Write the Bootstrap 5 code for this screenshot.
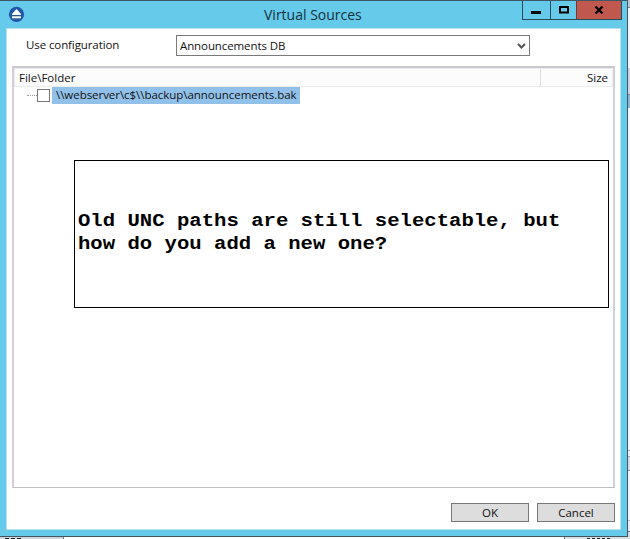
<!DOCTYPE html>
<html lang="en">
<head>
<meta charset="utf-8">
<title>Virtual Sources</title>
<link rel="stylesheet" href="https://cdn.jsdelivr.net/npm/bootstrap@5.3.0/dist/css/bootstrap.min.css">
<style>
body{width:630px;height:539px;font:11.5px/16px "Open Sans","Noto Sans",sans-serif;color:#111;
background:linear-gradient(#c8c8cc 0 7px,#888 7px 8px,#f4f4f4 8px 68px,#d4d4d8 68px 94px,#888 94px 95px,#8fb7cf 95px 108px,#f6f6f6 108px 450px,#aaa 450px 451px,#f0f0f0 451px 456px,#aaa 456px 457px,#ddd 457px 470px,#999 470px 471px,#f4f4f4 471px 520px,#bbb 520px 521px,#eee 521px 531px,#777 531px 532px,#ddd 532px)}
.dialog-window{width:628px;height:537px;background:#66caea;border:solid #3f5663;border-width:1px 1px 1px 0;padding:0 6px 6px 6px}
.title-bar{height:27px}
.title-text{font-size:14px;line-height:27px;left:264px;color:#15323d}
.app-icon{margin:5px 0 0 2px}
.win-controls{height:19px;margin-right:-1px;border:solid #2a4b58;border-width:0 1px 1px}
.win-controls button{border:0;padding:0;background:none;height:18px;display:block}
.win-controls svg{display:block}
.win-controls .w-min{width:27px}
.win-controls .w-max{width:26px;border-left:1px solid #2a4b58}
.win-controls .w-close{width:45px;background:#c1584e;border-left:1px solid #6d3b3b}
.client{height:502px;border:1px solid #b9e0ee;padding:6px 5px 0}
.config-row{height:21px}
.config-label{width:164px;padding-left:14px;line-height:19px;letter-spacing:-.1px}
.combo{width:354px;height:21px;border:1px solid #7a7a7a;padding:0 3px;line-height:19px;letter-spacing:-.1px}
.combo svg{margin:7px 0 0}
.tree{height:422px;margin-top:10px;border:solid #d2d2d6;border-width:2px 2px 1px 2px;border-top-color:#c9c9cd;border-bottom-color:#bdbdc1}
.tree-head{height:19px;background:#fcfcfc;border:1px solid #ececec;line-height:17px}
.tree-head .c-name{width:526px;padding-left:4px;border-right:1px solid #dedede}
.tree-head .c-size{padding-right:4px}
.tree-row{height:16px;padding-left:13px}
.twig{width:10px;border-top:1px dotted #999}
.check-box{width:13px;height:13px;border:1px solid #777;background:#fff}
.picked{background:#91c1e9;margin-left:2px;padding:0 4px;width:248px;height:17px;line-height:16px;white-space:nowrap;letter-spacing:-.04px}
.actions{margin-top:15px;gap:8px}
.actions button{width:78px;height:19px;border:1px solid #777;background:#ddd;padding:0;font-size:11.5px;line-height:16px;color:#111}
.note{left:74px;top:160px;width:535px;height:148px;border:1px solid #000;padding:0 3px 3px;font:bold 18.5px/23px "Liberation Mono",monospace;color:#000}
.note-text{transform:scaleX(1.114);transform-origin:left;white-space:nowrap}
.behind-bottom{height:2px;width:630px}
.behind-bottom .b1{width:64px;background:#d4d4d6;border-right:1px solid #777}
.behind-bottom .b2{width:500px;background:#fff}
.behind-bottom .b3{background:#ddd;border-left:1px solid #777}
.behind-bottom svg{display:block}
.t{display:inline-block;white-space:nowrap}
</style>
<script src="https://cdn.jsdelivr.net/npm/bootstrap@5.3.0/dist/js/bootstrap.bundle.min.js"></script>
</head>
<body class="m-0 overflow-hidden position-relative">
<main class="dialog-window">
  <header class="title-bar d-flex justify-content-between align-items-start">
    <svg class="app-icon" width="17" height="17" viewBox="0 0 17 17"><circle cx="8.5" cy="8.300" r="7.600" fill="#2159a8"/><path d="M8.500 3 13 8v1H4V8z" fill="#fff"/><path d="M4 10.300h9v2H4z" fill="#fff"/></svg>
    <span class="title-text position-absolute">Virtual Sources</span>
    <div class="win-controls d-flex">
      <button class="w-min" aria-label="Minimize"><svg width="27" height="18"><path d="M8 10h10v3H8z"/></svg></button>
      <button class="w-max" aria-label="Maximize"><svg width="25" height="18"><path d="M9 6h8v5.500H9z" fill="none" stroke="#000" stroke-width="2"/></svg></button>
      <button class="w-close" aria-label="Close"><svg width="44" height="18"><path d="M18.500 5.500l7 7M25.500 5.500l-7 7" stroke="#000" stroke-width="2.400"/></svg></button>
    </div>
  </header>
  <section class="client bg-white">
    <div class="config-row d-flex">
      <label class="config-label"><span class="t">Use configuration</span></label>
      <div class="combo d-flex justify-content-between"><span class="t">Announcements DB</span><svg width="9" height="7" viewBox="0 0 9 7"><path d="M1 1l3.500 3.500L8 1" fill="none" stroke="#555" stroke-width="2"/></svg></div>
    </div>
    <div class="tree">
      <div class="tree-head d-flex justify-content-between"><div class="c-name"><span class="t">File\Folder</span></div><div class="c-size"><span class="t">Size</span></div></div>
      <div class="tree-row d-flex align-items-center"><span class="twig"></span><span class="check-box"></span><div class="picked"><span class="t">\\webserver\c$\\backup\announcements.bak</span></div></div>
    </div>
    <div class="actions d-flex justify-content-end"><button>OK</button><button>Cancel</button></div>
  </section>
</main>
<div class="behind-bottom d-flex"><div class="b1"><svg width="30" height="2"><path d="M5 1.500h17" stroke="#222" stroke-width="1" stroke-dasharray="4 2"/></svg></div><div class="b2"></div><div class="b3 flex-fill"><svg width="60" height="2"><path d="M22 1.500h24" stroke="#222" stroke-width="1" stroke-dasharray="3 2"/></svg></div></div>
<aside class="note position-absolute d-flex align-items-center"><div class="note-text">Old UNC paths are still selectable, but<br>how do you add a new one?</div></aside>
</body>
</html>
